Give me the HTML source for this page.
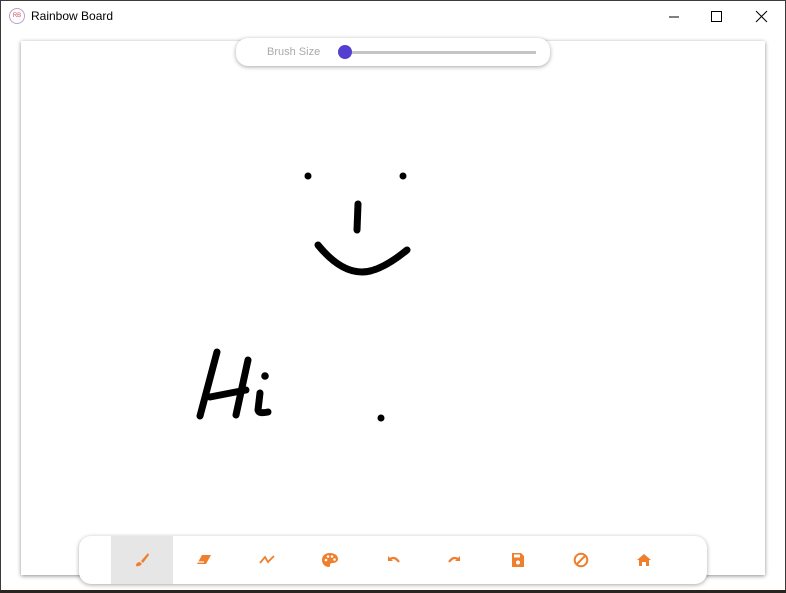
<!DOCTYPE html>
<html><head><style>
html,body{margin:0;padding:0;width:786px;height:593px;overflow:hidden;background:#fff;font-family:"Liberation Sans",sans-serif;}
.win{position:absolute;left:0;top:0;width:784px;height:591px;border:1px solid #3a3a3a;background:#fff;}
.title{position:absolute;left:30px;top:8px;font-size:12px;color:#000;}
.logo{position:absolute;left:8px;top:7px;width:14px;height:14px;border:1px solid #b9a0d0;border-radius:50%;font-size:6px;color:#d05060;text-align:center;line-height:14px;}
.card{position:absolute;left:21px;top:41px;width:744px;height:534px;background:#fff;box-shadow:0 1px 4px rgba(0,0,0,.45);}
.brush{position:absolute;left:236px;top:38px;width:314px;height:28px;background:#fff;border-radius:12px;box-shadow:0 1px 4px rgba(0,0,0,.35);}
.brush span{position:absolute;left:31px;top:8px;font-size:11px;color:#aaa;}
.track{position:absolute;left:110px;top:13px;width:190px;height:3px;background:#c4c4c4;}
.thumb{position:absolute;left:102px;top:7px;width:14px;height:14px;border-radius:50%;background:#5340d0;}
.tb{position:absolute;left:79px;top:536px;width:628px;height:48px;background:#fff;border-radius:12px;box-shadow:0 1px 4px rgba(0,0,0,.35);}
.act{position:absolute;left:32px;top:0;width:62px;height:48px;background:#e6e6e6;}
.tb svg{position:absolute;top:16px;}
.bottom{position:absolute;left:0;top:590px;width:786px;height:3px;background:#2a2520;}
</style></head><body>
<div class="win">
<div class="logo">RB</div>
<div class="title">Rainbow Board</div>
<svg style="position:absolute;left:660px;top:6px" width="120" height="20">
<line x1="8" y1="10" x2="18" y2="10" stroke="#000" stroke-width="1"/>
<rect x="50.5" y="4.5" width="10" height="10" fill="none" stroke="#000"/>
<path d="M95 4L106 15M106 4L95 15" stroke="#000" stroke-width="1"/>
</svg>
</div>
<div class="card"></div>
<svg style="position:absolute;left:0;top:0" width="786" height="593">
<g fill="none" stroke="#000" stroke-linecap="round" stroke-linejoin="round" stroke-width="7">
<path d="M358 204L357 230"/>
<path d="M318 245Q340 272 362 272Q380 272 407 250"/>
<path d="M217 352L200 416"/>
<path d="M248 360L236 415"/>
<path d="M210 397L246 390"/>
<path d="M260 393L258 410Q259 414 268 412"/>
</g>
<g fill="#000"><circle cx="308" cy="176" r="3.5"/><circle cx="403" cy="176" r="3.5"/><circle cx="265" cy="376" r="3.8"/><circle cx="381" cy="418" r="3.5"/></g>
</svg>
<div class="brush"><span>Brush Size</span><div class="track"></div><div class="thumb"></div></div>
<div class="tb"><div class="act"></div>
<svg style="left:54px" width="18" height="16" viewBox="0 0 18 16"><path d="M15 1L8 9L10 11L16 3Z M7 10Q3 10 3 14Q6 15 9 12Z" fill="#ef7f2d"/></svg>
<svg style="left:116px" width="18" height="16" viewBox="0 0 18 16"><path d="M7 3L16 3L11 12L2 12Z" fill="#ef7f2d"/><path d="M3 10L9 10" stroke="#fff" stroke-width="1.2"/></svg>
<svg style="left:179px" width="18" height="16" viewBox="0 0 18 16"><path d="M2 11L7 5L10 10L16 4" fill="none" stroke="#ef7f2d" stroke-width="1.8"/></svg>
<svg style="left:242px" width="18" height="16" viewBox="0 0 18 16"><path d="M9 1C4 1 1 4 1 8C1 12 4 15 8 15C9 15 9 14 9 13C9 11 11 11 12 11C15 11 17 9 17 7C17 3 13 1 9 1Z" fill="#ef7f2d"/><circle cx="5" cy="8" r="1.3" fill="#fff"/><circle cx="7" cy="4.5" r="1.3" fill="#fff"/><circle cx="11" cy="4.5" r="1.3" fill="#fff"/><circle cx="13.5" cy="7.5" r="1.3" fill="#fff"/></svg>
<svg style="left:305px" width="18" height="16" viewBox="0 0 18 16"><path d="M4 4L4 9L9 9" fill="#ef7f2d"/><path d="M5 8Q10 3 15 10" fill="none" stroke="#ef7f2d" stroke-width="2.2"/></svg>
<svg style="left:367px" width="18" height="16" viewBox="0 0 18 16"><path d="M14 4L14 9L9 9" fill="#ef7f2d"/><path d="M13 8Q8 3 3 10" fill="none" stroke="#ef7f2d" stroke-width="2.2"/></svg>
<svg style="left:430px" width="18" height="16" viewBox="0 0 18 16"><path d="M3 1L12 1L15 4L15 15L3 15Z" fill="#ef7f2d"/><rect x="5" y="2.5" width="6" height="3" fill="#fff"/><circle cx="9" cy="10.5" r="2" fill="#fff"/></svg>
<svg style="left:493px" width="18" height="16" viewBox="0 0 18 16"><circle cx="9" cy="8" r="6.3" fill="none" stroke="#ef7f2d" stroke-width="2"/><path d="M5 12L13 4" stroke="#ef7f2d" stroke-width="2"/></svg>
<svg style="left:556px" width="18" height="16" viewBox="0 0 18 16"><path d="M9 2L16 8L14 8L14 14L11 14L11 10L7 10L7 14L4 14L4 8L2 8Z" fill="#ef7f2d"/></svg>
</div>
<div class="bottom"></div>
</body></html>
